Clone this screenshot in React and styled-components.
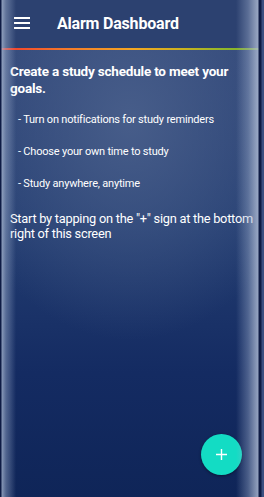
import React from 'react';
import styled, { createGlobalStyle } from 'styled-components';

const GlobalStyle = createGlobalStyle`
    html, body {
        margin: 0;
        padding: 0;
        background: #0d1a40;
    }
    * {
        box-sizing: border-box;
    }
`;

const Screen = styled.div`
    position: relative;
    width: 264px;
    height: 497px;
    overflow: hidden;
    display: flex;
    flex-direction: column;
    font-family: Roboto, "Liberation Sans", sans-serif;
    color: #ffffff;
    background:
        radial-gradient(ellipse 180px 220px at 130px 120px, rgba(74, 96, 140, 0.9), rgba(74, 96, 140, 0) 100%),
        linear-gradient(to bottom, #34497a 0%, #243e72 45%, #142b62 75%, #0f2558 100%);

    &::after {
        content: '';
        position: absolute;
        inset: 0;
        pointer-events: none;
        background: linear-gradient(
            to right,
            #0e1b44 0px,
            #0e1b44 1px,
            rgba(170, 185, 210, 0.75) 2px,
            rgba(160, 176, 205, 0.45) 6px,
            rgba(150, 166, 200, 0) 16px,
            rgba(150, 166, 200, 0) 236px,
            rgba(160, 176, 205, 0.4) 248px,
            rgba(180, 192, 215, 0.8) 258px,
            #0e1b44 259px,
            #0e1b44 261px,
            #3a4f80 262px,
            #3a4f80 264px
        );
    }
`;

const Toolbar = styled.header`
    height: 48px;
    flex-shrink: 0;
    display: flex;
    align-items: center;
    padding: 0 0 0 14px;
    background: #2c4170;
`;

const MenuButton = styled.div`
    width: 16px;
    display: flex;
    flex-direction: column;
    gap: 3px;
    margin-right: 27px;
    margin-top: -2px;

    span {
        display: block;
        height: 2px;
        background: #fff;
    }
`;

const Title = styled.h1`
    margin: 0;
    margin-top: -2px;
    font-size: 16px;
    font-weight: 700;
    letter-spacing: -0.2px;
`;

const Rainbow = styled.div`
    height: 2px;
    flex-shrink: 0;
    background: linear-gradient(to right, #f23a2c 0%, #f5792a 25%, #f5a623 50%, #c9b21f 70%, #8fb62a 85%, #7bae2c 100%);
`;

const Content = styled.main`
    flex: 1;
    padding: 13px 6px 0 10px;
`;

const Heading = styled.p`
    margin: 0;
    font-size: 13.5px;
    font-weight: 700;
    line-height: 17px;
    letter-spacing: -0.2px;
`;

const TipList = styled.ul`
    list-style: none;
    margin: 16px 0 0 0;
    padding: 0 0 0 8px;
    display: flex;
    flex-direction: column;
    gap: 18px;
`;

const Tip = styled.li`
    font-size: 11px;
    line-height: 14px;
    letter-spacing: -0.2px;
`;

const Hint = styled.p`
    margin: 20px 0 0 0;
    font-size: 12.8px;
    line-height: 15px;
    letter-spacing: -0.25px;
`;

const Fab = styled.button`
    position: absolute;
    right: 22px;
    bottom: 22px;
    width: 41px;
    height: 41px;
    border: none;
    border-radius: 50%;
    background: #13dcc4;
    box-shadow: 0 1px 3px rgba(0, 0, 0, 0.4);
    display: flex;
    align-items: center;
    justify-content: center;
    padding: 0;
`;

function App() {
    const tips = [
        '- Turn on notifications for study reminders',
        '- Choose your own time to study',
        '- Study anywhere, anytime',
    ];

    return (
        <>
            <GlobalStyle />
            <Screen>
                <Toolbar>
                    <MenuButton>
                        <span />
                        <span />
                        <span />
                    </MenuButton>
                    <Title>Alarm Dashboard</Title>
                </Toolbar>
                <Rainbow />
                <Content>
                    <Heading>Create a study schedule to meet your goals.</Heading>
                    <TipList>
                        {tips.map((t) => (
                            <Tip key={t}>{t}</Tip>
                        ))}
                    </TipList>
                    <Hint>Start by tapping on the "+" sign at the bottom right of this screen</Hint>
                </Content>
                <Fab aria-label="add">
                    <svg width="11" height="11" viewBox="0 0 11 11">
                        <path d="M5.5 0v11M0 5.5h11" stroke="#fff" strokeWidth="1.4" />
                    </svg>
                </Fab>
            </Screen>
        </>
    );
}

export default App;
